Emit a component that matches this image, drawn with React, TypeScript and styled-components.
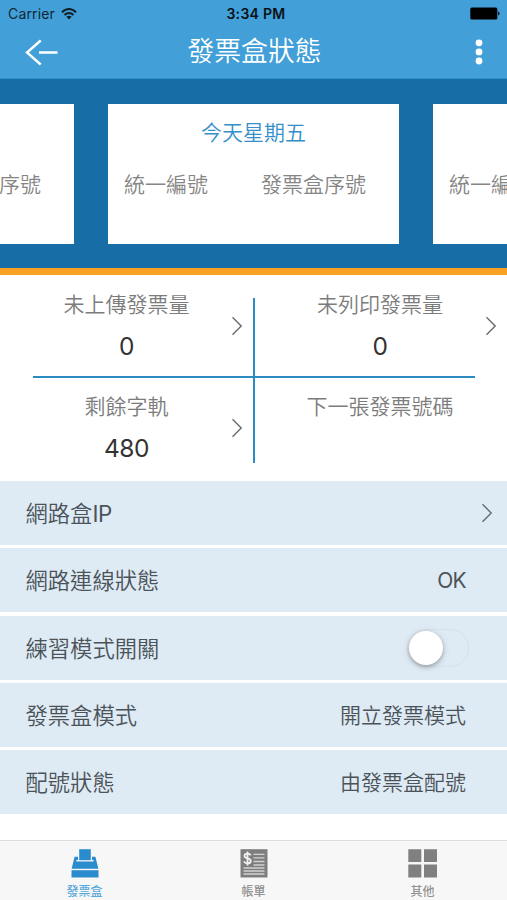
import React from "react";
import styled, { createGlobalStyle } from "styled-components";

const Global = createGlobalStyle`
  * { box-sizing: border-box; }
  body { margin: 0; background: #fff; }
`;

const Screen = styled.div`
  width: 507px;
  height: 900px;
  overflow: hidden;
  display: flex;
  flex-direction: column;
  background: #fff;
  font-family: Inter, "Noto Sans CJK TC", sans-serif;
  font-weight: 400;
  svg { display: block; flex: none; }
`;

const Header = styled.header`
  height: 79px;
  flex: none;
  background: #429fd7;
  border-bottom: 1px solid #3391c9;
`;

const StatusBar = styled.div`
  height: 27px;
  display: grid;
  grid-template-columns: 1fr auto 1fr;
  align-items: center;
  padding: 0 7px 0 8px;
  color: #0a1218;
`;

const Carrier = styled.div`
  display: flex;
  align-items: center;
  gap: 6px;
  font-size: 14px;
  line-height: 27px;
  letter-spacing: 0.15px;
  color: #102838;
`;

const Clock = styled.div`
  font-size: 14px;
  font-weight: 600;
  letter-spacing: 0.3px;
  line-height: 27px;
  padding-left: 4px;
`;

const Battery = styled.div`
  display: flex;
  justify-content: flex-end;
`;

const NavBar = styled.div`
  height: 51px;
  display: grid;
  grid-template-columns: 60px 1fr 60px;
  align-items: center;
  padding: 0 22px 0 25px;
`;

const Title = styled.h1`
  margin: 0;
  text-align: center;
  font-size: 26.8px;
  line-height: 40px;
  font-weight: 350;
  color: #fff;
  padding: 0 1px 4px 0;
`;

const MenuSlot = styled.div`
  display: flex;
  justify-content: flex-end;
`;

const Carousel = styled.section`
  height: 196px;
  flex: none;
  display: flex;
  justify-content: center;
  gap: 34px;
  padding-top: 25px;
  overflow: hidden;
  background: #176da6;
  border-bottom: 7px solid #f9a125;
`;

const Card = styled.article`
  width: 291px;
  height: 139.5px;
  flex: none;
  background: #fff;
`;

const CardDay = styled.div`
  height: 30px;
  margin-top: 14px;
  line-height: 30px;
  font-size: 21px;
  font-weight: 350;
  text-align: center;
  color: #3590ca;
`;

const CardFields = styled.div`
  display: flex;
  justify-content: space-between;
  margin-top: 22px;
  padding: 0 33px 0 16px;
  font-size: 21px;
  font-weight: 350;
  line-height: 30px;
  color: #858585;
`;

const Stats = styled.section`
  height: 206px;
  flex: none;
  display: grid;
  grid-template-columns: 253px 254px;
  grid-template-rows: 102px 103px;
  position: relative;
`;

const Stat = styled.div`
  display: flex;
  flex-direction: column;
  align-items: center;
  padding-top: 15px;
  position: relative;
`;

const StatLabel = styled.div`
  font-size: 21px;
  font-weight: 350;
  line-height: 30px;
  color: #7c7c7c;
`;

const StatValue = styled.div`
  font-size: 24.5px;
  line-height: 32px;
  letter-spacing: -0.4px;
  margin-top: 10px;
  color: #333;
`;

const StatArrow = styled.div`
  position: absolute;
  right: 10px;
  top: 41px;
`;

const Divider = styled.div<{ $vertical?: boolean }>`
  position: absolute;
  background: #2c8cc2;
  left: ${(p) => (p.$vertical ? "253px" : "33px")};
  top: ${(p) => (p.$vertical ? "23px" : "101px")};
  width: ${(p) => (p.$vertical ? "2px" : "442px")};
  height: ${(p) => (p.$vertical ? "165px" : "2px")};
`;

const List = styled.section`
  flex: 1;
  display: flex;
  flex-direction: column;
  gap: 3.3px;
`;

const Row = styled.div<{ $arrow?: boolean }>`
  height: 64px;
  display: flex;
  align-items: center;
  justify-content: space-between;
  padding: 0 ${(p) => (p.$arrow ? 14 : 41)}px 0 25.5px;
  background: #deeaf4;
  color: #4b5359;
`;

const RowLabel = styled.span`
  font-size: 22.3px;
  font-weight: 350;
  line-height: 32px;
  padding-top: 2px;
`;

const RowValue = styled.span<{ $latin?: boolean }>`
  font-size: 21px;
  font-weight: ${(p) => (p.$latin ? 400 : 350)};
  letter-spacing: ${(p) => (p.$latin ? "-0.7px" : "0")};
  line-height: 32px;
  padding-top: 2px;
`;

const Latin = styled.span`
  font-weight: 400;
  letter-spacing: -0.3px;
`;

const Switch = styled.div`
  width: 62px;
  height: 38px;
  margin-right: -3px;
  padding: 1px;
  border: 1px solid #dddfe3;
  border-radius: 19px;
`;

const Knob = styled.div`
  width: 34px;
  height: 34px;
  border-radius: 50%;
  background: #fff;
  box-shadow: 0 2px 4px rgba(0, 0, 0, 0.28), 0 1px 9px rgba(60, 90, 110, 0.12);
`;

const TabBar = styled.nav`
  height: 60px;
  flex: none;
  display: grid;
  grid-template-columns: repeat(3, 1fr);
  background: #f7f7f7;
  border-top: 1px solid #dedede;
`;

const Tab = styled.div<{ $active?: boolean }>`
  display: flex;
  flex-direction: column;
  align-items: center;
  padding-top: 8px;
  gap: 5px;
  font-size: 12px;
  line-height: 18px;
  font-weight: 500;
  color: ${(p) => (p.$active ? "#5aa9da" : "#929292")};
`;

const Chevron = () => (
  <svg width="12" height="20" viewBox="0 0 12 20" fill="none" stroke="#666b70" strokeWidth="1.4">
    <path d="M1.5 1.3 10.2 10 1.5 18.7" />
  </svg>
);

const BoxIcon = () => (
  <svg width="28" height="29" viewBox="0 0 28 29" fill="#2a8ccd">
    <path d="M8.2.2h11.6v11H8.2z" />
    <path d="M3.6 7.8h3.4v3.2H5.4v1.4h17.2V11H21V7.8h3.4l3 12H.6z" />
    <path d="M.5 21.2h27v7.3H.5z" />
  </svg>
);

const BillIcon = () => (
  <svg width="28" height="29" viewBox="0 0 28 29">
    <path fill="#7e7e7e" d="M.5.2h27v28.3H.5z" />
    <path stroke="#d2d2d2" strokeWidth="1.3" d="M13.5 5.3h11M13.5 8.9h11M13.5 12.5h11M13.5 16h11M3.5 19h21M3.5 22h21M3.5 25h21" />
    <path fill="none" stroke="#f2f2f2" strokeWidth="1.8" d="M10.8 6.2C10 4.9 9 4.6 7.5 4.6c-4 0-4 4.3 0 4.8 4.5.6 4.2 5 0 5-1.7 0-2.9-.6-3.6-2M7.5 2.6v13.8" />
  </svg>
);

const GridIcon = () => (
  <svg width="29" height="29" viewBox="0 0 29 29" fill="#808080">
    <path d="M.3.3h13V13H.3zM16 .3h13V13H16zM.3 15.6h13v12.9H.3zM16 15.6h13v12.9H16z" />
  </svg>
);

const stats = [
  { label: "未上傳發票量", value: "0", arrow: true },
  { label: "未列印發票量", value: "0", arrow: true },
  { label: "剩餘字軌", value: "480", arrow: true },
  { label: "下一張發票號碼", value: "", arrow: false },
];

const days = ["", "今天星期五", ""];

export default function App() {
  return (
    <>
      <Global />
      <Screen>
        <Header>
          <StatusBar>
            <Carrier>
              Carrier
              <svg width="16" height="12" viewBox="0 0 16 12" fill="none" stroke="#102028" strokeWidth="2">
                <path d="M1 4.3C5-.1 11-.1 15 4.3M3.5 7c2.6-2.7 6.4-2.7 9 0" />
                <path d="M8 11.4 5.4 8.8c1.5-1.4 3.7-1.4 5.2 0z" fill="#102028" stroke="none" />
              </svg>
            </Carrier>
            <Clock>3:34 PM</Clock>
            <Battery>
              <svg width="30" height="13" viewBox="0 0 30 13">
                <rect x="0.3" y="0.5" width="27" height="12" rx="1.5" />
                <path d="M28.2 4.6c1.8.4 1.8 3.4 0 3.8z" />
              </svg>
            </Battery>
          </StatusBar>
          <NavBar>
            <svg width="34" height="28" viewBox="0 0 34 28" fill="none" stroke="#fff" strokeWidth="2.4">
              <path d="M15.7 1.5 2 13.5l13.7 12M14 13.5h18.5" />
            </svg>
            <Title>發票盒狀態</Title>
            <MenuSlot>
              <svg width="12" height="28" viewBox="0 0 12 28" fill="#fff">
                <circle cx="6" cy="3.8" r="3.4" />
                <circle cx="6" cy="12.9" r="3.4" />
                <circle cx="6" cy="22" r="3.4" />
              </svg>
            </MenuSlot>
          </NavBar>
        </Header>
        <Carousel>
          {days.map((day, i) => (
            <Card key={i}>
              <CardDay>{day}</CardDay>
              <CardFields>
                <span>統一編號</span>
                <span>發票盒序號</span>
              </CardFields>
            </Card>
          ))}
        </Carousel>
        <Stats>
          {stats.map((s) => (
            <Stat key={s.label}>
              <StatLabel>{s.label}</StatLabel>
              <StatValue>{s.value}</StatValue>
              {s.arrow && (
                <StatArrow>
                  <Chevron />
                </StatArrow>
              )}
            </Stat>
          ))}
          <Divider />
          <Divider $vertical />
        </Stats>
        <List>
          <Row $arrow>
            <RowLabel>
              網路盒<Latin>IP</Latin>
            </RowLabel>
            <Chevron />
          </Row>
          <Row>
            <RowLabel>網路連線狀態</RowLabel>
            <RowValue $latin>OK</RowValue>
          </Row>
          <Row>
            <RowLabel>練習模式開關</RowLabel>
            <Switch role="switch" aria-checked={false}>
              <Knob />
            </Switch>
          </Row>
          <Row>
            <RowLabel>發票盒模式</RowLabel>
            <RowValue>開立發票模式</RowValue>
          </Row>
          <Row>
            <RowLabel>配號狀態</RowLabel>
            <RowValue>由發票盒配號</RowValue>
          </Row>
        </List>
        <TabBar>
          <Tab $active>
            <BoxIcon />
            發票盒
          </Tab>
          <Tab>
            <BillIcon />
            帳單
          </Tab>
          <Tab>
            <GridIcon />
            其他
          </Tab>
        </TabBar>
      </Screen>
    </>
  );
}
